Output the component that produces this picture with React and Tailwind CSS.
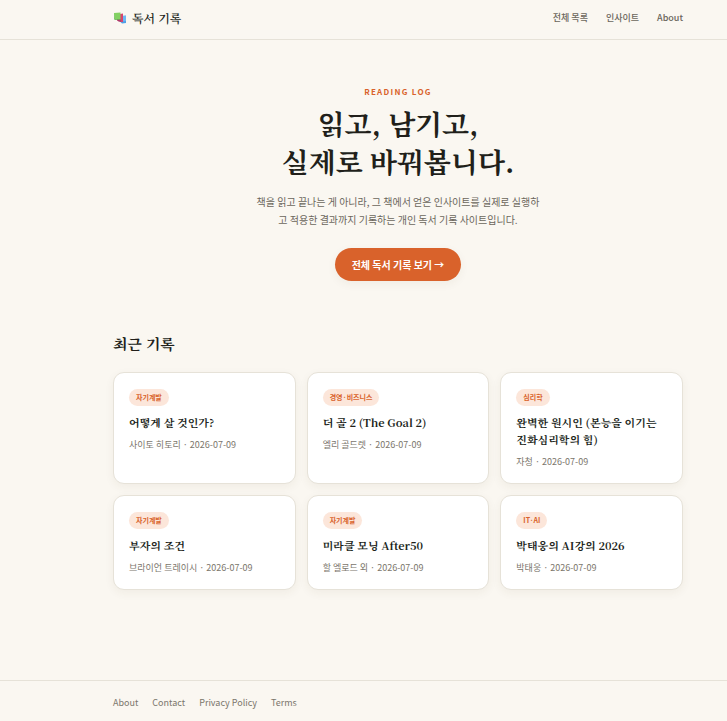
const navLinks = [
  { label: '전체 목록', href: '#books' },
  { label: '인사이트', href: '#insights' },
  { label: 'About', href: '#about' },
];

const footerLinks = [
  { label: 'About', href: '#about' },
  { label: 'Contact', href: '#contact' },
  { label: 'Privacy Policy', href: '#privacy' },
  { label: 'Terms', href: '#terms' },
];

const books = [
  { category: '자기계발', title: '어떻게 살 것인가?', author: '사이토 히토리', date: '2026-07-09' },
  { category: '경영·비즈니스', title: '더 골 2 (The Goal 2)', author: '엘리 골드렛', date: '2026-07-09' },
  { category: '심리학', title: '완벽한 원시인 (본능을 이기는 진화심리학의 힘)', author: '자청', date: '2026-07-09' },
  { category: '자기계발', title: '부자의 조건', author: '브라이언 트레이시', date: '2026-07-09' },
  { category: '자기계발', title: '미라클 모닝 After50', author: '할 엘로드 외', date: '2026-07-09' },
  { category: 'IT·AI', title: '박태웅의 AI강의 2026', author: '박태웅', date: '2026-07-09' },
];

const BooksIcon = () => (
  <svg viewBox="0 0 14 12" className="h-3 w-[14px]" aria-hidden="true">
    <path d="M8 4l5-.5V11l-4 .5L6.500 9z" fill="#4f9fe6" />
    <path d="M10 4h3v5l-3 .5z" fill="#6cb8f4" />
    <path d="M7 2l3-.5V10H8.500L4 8.500V6.500z" fill="#d8446c" />
    <path d="M4 8l4 .5v1.200L5.500 9.500z" fill="#a5376a" />
    <path d="M1 1l6.500-.5V7L1.500 7.500z" fill="#82d162" />
    <path d="M1 1l.7 6.300H7.500V8H2L1 7z" fill="#5cae56" />
  </svg>
);

const Header = () => (
  <header className="border-b border-[#e6e2d8]">
    <div className="flex h-[39px] items-center justify-between pr-11 pb-[3px] pl-[113px]">
      <a
        href="#home"
        className="flex items-center gap-[5px] font-['Noto_Serif_KR','Noto_Serif_CJK_KR','Liberation_Serif','Noto_Sans_CJK_KR',serif] text-xs font-semibold"
      >
        <BooksIcon />
        독서 기록
      </a>
      <nav className="flex gap-[18px] text-[9px] font-medium text-[#6b665c]">
        {navLinks.map(link => (
          <a key={link.label} href={link.href}>
            {link.label}
          </a>
        ))}
      </nav>
    </div>
  </header>
);

const Hero = () => (
  <section className="flex flex-col items-center text-center">
    <p className="text-[8px] leading-3 font-bold tracking-[0.16em] text-[#d9622b]">
      READING LOG
    </p>
    <h1 className="mt-[6px] font-['Noto_Serif_KR','Noto_Serif_CJK_KR','Liberation_Serif','Noto_Sans_CJK_KR',serif] text-[28px] leading-[38px] font-bold">
      읽고, 남기고,
      <br />
      실제로 바꿔봅니다.
    </h1>
    <p className="mt-[13px] max-w-[288px] text-[10px] leading-[18px] text-[#6b665c]">
      책을 읽고 끝나는 게 아니라, 그 책에서 얻은 인사이트를 실제로 실행하고
      적용한 결과까지 기록하는 개인 독서 기록 사이트입니다.
    </p>
    <a
      href="#books"
      className="mt-[19px] rounded-full bg-[#d9622b] px-[17px] py-2 text-[10px] leading-[17px] font-bold text-white shadow-[0_3px_10px_rgba(80,70,30,0.06)]"
    >
      전체 독서 기록 보기 →
    </a>
  </section>
);

const BookCard = ({ book }) => (
  <a
    href="#book"
    className="block rounded-[11px] border border-[#e6e2d8] bg-white px-[15px] pt-4 pb-[14px] shadow-[0_3px_10px_rgba(80,70,30,0.06)]"
  >
    <span className="block w-fit rounded-full bg-[#fce6da] px-[7px] text-[7px] leading-[17px] font-bold text-[#d9622b]">
      {book.category}
    </span>
    <h3 className="mt-2 font-['Noto_Serif_KR','Noto_Serif_CJK_KR','Liberation_Serif','Noto_Sans_CJK_KR',serif] text-[11px] leading-[17px] font-bold">
      {book.title}
    </h3>
    <p className="mt-[7px] text-[9px] leading-[14px] text-[#7b766c]">
      {book.author} · {book.date}
    </p>
  </a>
);

const App = () => {
  return (
    <div className="flex min-h-screen flex-col bg-[#faf7f1] font-['Noto_Sans_CJK_KR',sans-serif] text-[#211f1a]">
      <Header />
      <main className="flex-1 pt-[46px] pr-11 pb-[90px] pl-[113px]">
        <Hero />
        <section className="mt-[52px]">
          <h2 className="font-['Noto_Serif_KR','Noto_Serif_CJK_KR','Liberation_Serif','Noto_Sans_CJK_KR',serif] text-[15px] leading-[22px] font-bold">
            최근 기록
          </h2>
          <div className="mt-[17px] grid grid-cols-3 gap-[11px]">
            {books.map(book => (
              <BookCard key={book.title} book={book} />
            ))}
          </div>
        </section>
      </main>
      <footer className="border-t border-[#e6e2d8] pt-[15px] pr-11 pb-[11px] pl-[113px]">
        <nav className="flex gap-[14px] text-[9px] leading-[14px] text-[#7b766c]">
          {footerLinks.map(link => (
            <a key={link.label} href={link.href}>
              {link.label}
            </a>
          ))}
        </nav>
      </footer>
    </div>
  );
};

export default App;
